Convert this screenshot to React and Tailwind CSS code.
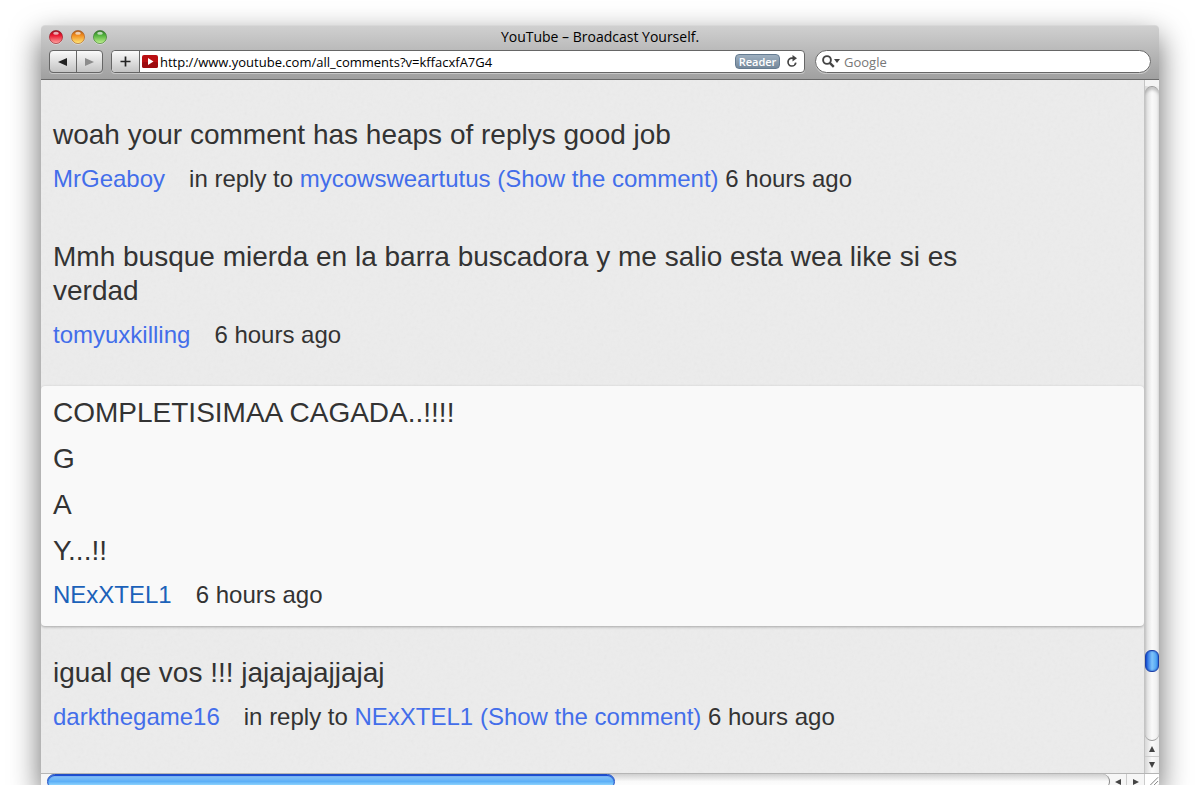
const comments = [
  {
    lines: ['woah your comment has heaps of replys good job'],
    author: 'MrGeaboy',
    replyTo: 'mycowsweartutus',
    time: '6 hours ago',
  },
  {
    lines: ['Mmh busque mierda en la barra buscadora y me salio esta wea like si es verdad'],
    author: 'tomyuxkilling',
    time: '6 hours ago',
  },
  {
    lines: ['COMPLETISIMAA CAGADA..!!!!', 'G', 'A', 'Y...!!'],
    author: 'NExXTEL1',
    time: '6 hours ago',
    active: true,
  },
  {
    lines: ['igual qe vos !!! jajajajajjajaj'],
    author: 'darkthegame16',
    replyTo: 'NExXTEL1',
    time: '6 hours ago',
  },
];

const lights = [
  { name: 'Close', rim: '#8e1420', mid: '#e8132b', glow: '#ffa8a4' },
  { name: 'Minimize', rim: '#a4561c', mid: '#f08a1d', glow: '#ffe97a' },
  { name: 'Zoom', rim: '#33702a', mid: '#4fb03a', glow: '#c3f291' },
];

function Light({ name, rim, mid, glow }) {
  return (
    <button aria-label={name} className="h-4 w-4">
      <svg viewBox="0 0 16 16" className="h-4 w-4">
        <defs>
          <linearGradient id={name} x1="0" y1="0" x2="0" y2="1">
            <stop offset="0" stopColor={rim} />
            <stop offset=".35" stopColor={mid} />
            <stop offset="1" stopColor={glow} />
          </linearGradient>
        </defs>
        <circle cx="8" cy="8.7" r="7" fill="#fff" opacity=".45" />
        <circle cx="8" cy="8" r="6.6" fill={`url(#${name})`} stroke={rim} strokeOpacity=".6" />
        <ellipse cx="8" cy="4.2" rx="2.8" ry="1.5" fill="#fff" opacity=".65" />
      </svg>
    </button>
  );
}

function Arrow({ dir, className }) {
  const points = {
    left: '0,4 8,0 8,8',
    right: '8,4 0,0 0,8',
    up: '4,0 8,8 0,8',
    down: '4,8 8,0 0,0',
  };
  return (
    <svg viewBox="0 0 8 8" className={className} preserveAspectRatio="none">
      <polygon points={points[dir]} fill="currentColor" />
    </svg>
  );
}

function Toolbar() {
  return (
    <div className="flex h-[29px] items-start px-2">
      <div className="flex h-[23px] w-[54px] rounded border border-[#666] bg-gradient-to-b from-[#fafafa] to-[#c4c4c4] shadow-[0_1px_0_#c8c8c8]">
        <button aria-label="Back" className="flex flex-1 items-center justify-center border-r border-[#666] text-[#222]">
          <Arrow dir="left" className="h-2 w-[9px]" />
        </button>
        <button aria-label="Forward" className="flex flex-1 items-center justify-center text-[#8c8c8c]">
          <Arrow dir="right" className="h-2 w-[9px]" />
        </button>
      </div>
      <div className="ml-2 flex h-[23px] flex-1 rounded border border-[#666] bg-white shadow-[0_1px_0_#c8c8c8]">
        <button aria-label="Add bookmark" className="flex w-7 items-center justify-center rounded-l border-r border-[#666] bg-gradient-to-b from-[#fafafa] to-[#c4c4c4]">
          <svg viewBox="0 0 11 11" className="h-[11px] w-[11px]">
            <path d="M5.5 0.5v10M0.5 5.5h10" stroke="#222" strokeWidth="1.7" />
          </svg>
        </button>
        <div className="flex flex-1 items-center pl-0.5 pr-1.5">
          <svg viewBox="0 0 16 13" className="h-[13px] w-4">
            <rect width="16" height="13" rx="2" fill="#ba0f13" />
            <rect y="7" width="16" height="6" rx="2" fill="#9c0b10" />
            <path d="M6 3l5.500 3.500L6 10z" fill="#fff" />
          </svg>
          <input
            aria-label="Address"
            defaultValue="http://www.youtube.com/all_comments?v=kffacxfA7G4"
            className="ml-0.5 min-w-0 flex-1 bg-transparent text-[13px] leading-5 text-black outline-none"
          />
          <button className="h-[15px] w-[45px] rounded-sm border border-[#667c91] bg-gradient-to-b from-[#9fb0c0] to-[#76899b] text-[11px] leading-3 font-semibold text-white">
            Reader
          </button>
          <button aria-label="Reload" className="ml-1.5">
            <svg viewBox="0 0 12 13" className="h-[13px] w-3">
              <path d="M7.500 3.200H6A3.900 3.900 0 1 0 9.800 7.600" fill="none" stroke="#444" strokeWidth="1.700" />
              <path d="M6.500 0l4.500 3.200-4.500 3.200z" fill="#444" />
            </svg>
          </button>
        </div>
      </div>
      <label className="ml-[10px] flex h-[23px] w-[336px] items-center rounded-full border border-[#666] bg-white pl-1.5 shadow-[0_1px_0_#c8c8c8]">
        <svg viewBox="0 0 18 13" className="h-[13px] w-[18px]">
          <circle cx="5" cy="5" r="3.900" fill="none" stroke="#444" strokeWidth="1.900" />
          <path d="M7.800 7.800l4 4" stroke="#444" strokeWidth="2.400" />
          <path d="M12 4h6l-3 4z" fill="#444" />
        </svg>
        <input
          aria-label="Search"
          placeholder="Google"
          className="ml-1 min-w-0 flex-1 bg-transparent text-[13px] leading-5 outline-none placeholder:text-[#777]"
        />
      </label>
    </div>
  );
}

function Comment({ lines, author, replyTo, time, active }) {
  const link = active ? 'text-[#1c62b9]' : 'text-[#436eea]';
  return (
    <article
      className={`flex flex-col gap-3 px-3 pt-2.5 pb-4 text-[#333] ${active ? 'rounded bg-[#f9f9f9] shadow-[0_1px_3px_rgba(0,0,0,0.3)]' : ''}`}
    >
      {lines.map((line) => (
        <p key={line} className="max-w-[930px] text-[28px] leading-[34px]">{line}</p>
      ))}
      <div className="flex text-2xl leading-[30px] whitespace-pre">
        <a href="#" className={`mr-6 ${link}`}>{author}</a>
        <p>
          {replyTo && (
            <>
              in reply to <a href="#" className={link}>{replyTo}</a> <a href="#" className={link}>(Show the comment)</a>{' '}
            </>
          )}
          {time}
        </p>
      </div>
    </article>
  );
}

// paper grain behind the comments
function Grain() {
  return (
    <svg className="absolute inset-0 h-full w-full opacity-5" aria-hidden="true">
      <filter id="grain">
        <feTurbulence type="fractalNoise" baseFrequency="0.3" numOctaves="2" />
        <feColorMatrix type="saturate" values="0" />
      </filter>
      <rect width="100%" height="100%" filter="url(#grain)" />
    </svg>
  );
}

function VerticalScrollbar() {
  return (
    <div className="flex w-[15px] flex-col border-l border-[#c4c4c4] bg-gradient-to-r from-[#d8d8d8] via-[#fafafa] to-[#ececec]">
      <div className="h-1.5 bg-[#f4f4f4]" />
      <div className="flex flex-1 flex-col justify-end rounded-full border-t border-b border-[#999] pb-[68px] shadow-[inset_0_3px_3px_rgba(0,0,0,0.2)]">
        <div className="h-[22px] rounded-md border border-[#1d3fa6] bg-gradient-to-r from-[#1c55d8] via-[#7fc4fa] to-[#3f9af0] shadow-[inset_0_0_2px_#0a35b5]" />
      </div>
      <button aria-label="Scroll up" className="flex h-4 items-center justify-center border-b border-[#ccc] text-[#444]">
        <Arrow dir="up" className="h-1.5 w-1.5" />
      </button>
      <button aria-label="Scroll down" className="flex h-4 items-center justify-center text-[#444]">
        <Arrow dir="down" className="h-1.5 w-1.5" />
      </button>
    </div>
  );
}

function HorizontalScrollbar() {
  return (
    <div className="h-3 overflow-hidden border-t border-[#b5b5b5] bg-[#f6f6f6]">
      <div className="flex h-[15px]">
        <div className="ml-1.5 flex-1 rounded-full border-r border-[#888] bg-gradient-to-b from-[#cfcfcf] via-[#fafafa] to-white">
          <div className="h-[15px] w-[53.5%] rounded-full border border-[#1f4ec4] bg-gradient-to-b from-[#8fc4f5] via-[#5db0f7] to-[#b5f0ff] shadow-[inset_0_1px_1px_#1040d0]" />
        </div>
        <button aria-label="Scroll left" className="flex w-[17px] items-center justify-center border-r border-[#ccc] text-[#444]">
          <Arrow dir="left" className="h-1.5 w-1.5" />
        </button>
        <button aria-label="Scroll right" className="flex w-[17px] items-center justify-center text-[#444]">
          <Arrow dir="right" className="h-1.5 w-1.5" />
        </button>
        <svg viewBox="0 0 15 15" className="h-[15px] w-[15px] border-l border-[#ccc] bg-white">
          <path d="M3 14L14 3M7 14l7-7M11 14l3-3" stroke="#777" strokeWidth="1" />
        </svg>
      </div>
    </div>
  );
}

export default function App() {
  return (
    <div className="flex h-screen flex-col overflow-hidden bg-white px-[41px] pt-[25px] font-['Open_Sans',sans-serif]">
      <div className="flex min-h-0 flex-1 flex-col rounded-t shadow-[0_12px_30px_rgba(0,0,0,0.6)]">
        <header className="rounded-t border-t border-b border-t-[#d8d8d8] border-b-[#6a6a6a] bg-gradient-to-b from-[#d0d0d0] to-[#a0a0a0]">
          <div className="relative flex h-6 items-center px-[7px] pb-0.5">
            <div className="flex gap-1.5">
              {lights.map((l) => (
                <Light key={l.name} {...l} />
              ))}
            </div>
            <h1 className="absolute inset-x-0 text-center text-sm text-black">YouTube – Broadcast Yourself.</h1>
          </div>
          <Toolbar />
        </header>
        <div className="flex min-h-0 flex-1">
          <main className="relative flex-1 overflow-hidden bg-[#ececec] font-['Liberation_Sans',Arial,sans-serif]">
            <Grain />
            <div className="relative flex flex-col gap-5 pt-7">
              {comments.map((c) => (
                <Comment key={c.author} {...c} />
              ))}
            </div>
          </main>
          <VerticalScrollbar />
        </div>
        <HorizontalScrollbar />
      </div>
    </div>
  );
}
